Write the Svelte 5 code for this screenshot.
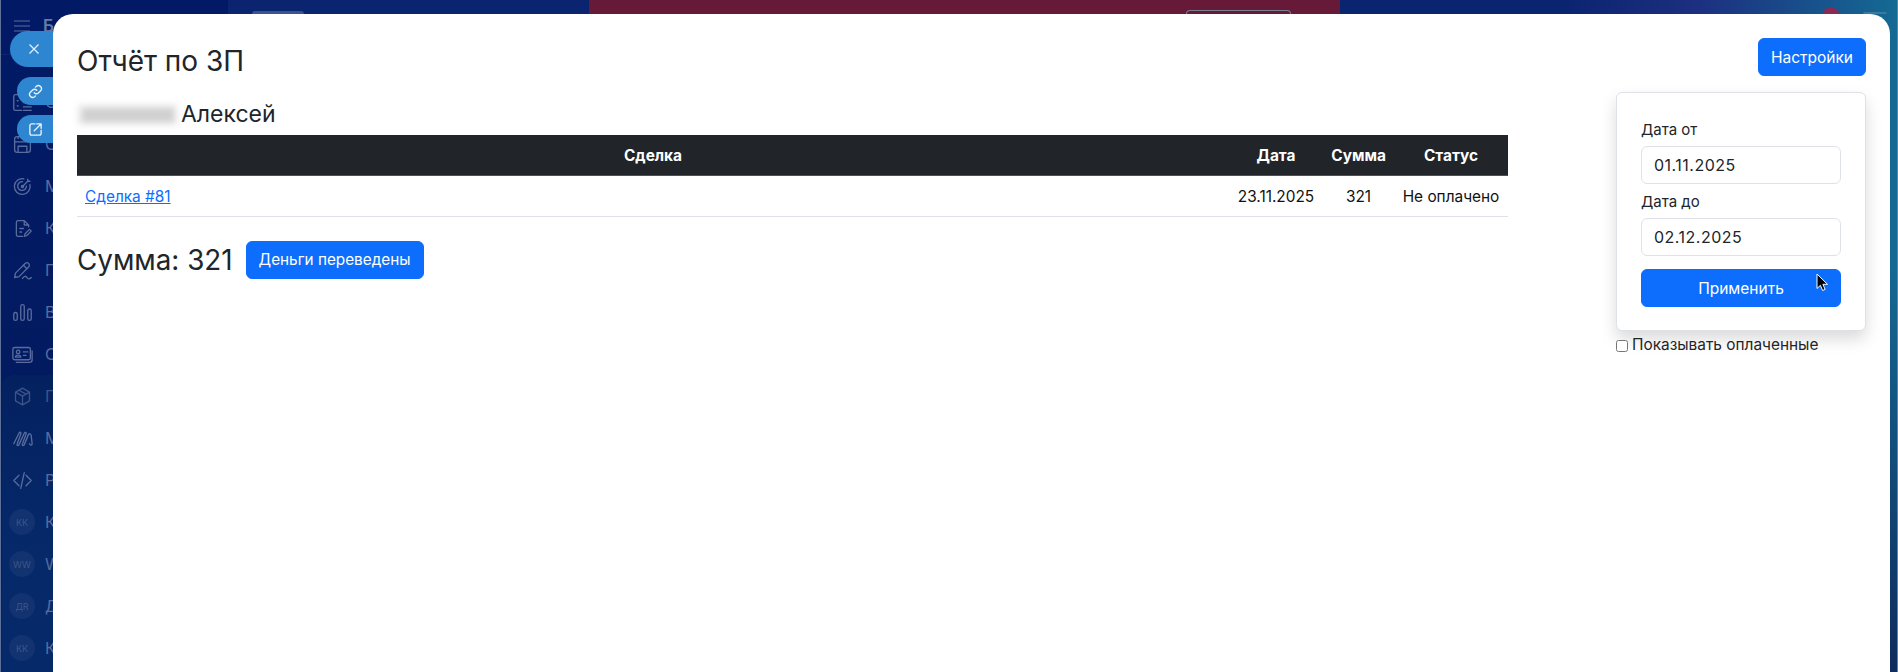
<script>
  const navTop = [
    { l: 'С', i: 'list' }, { l: 'С', i: 'save' }, { l: 'М', i: 'target' }, { l: 'К', i: 'doc' },
    { l: 'П', i: 'pen' }, { l: 'В', i: 'bars' }, { l: 'С', i: 'card' }
  ];
  const navGroup = [
    { l: 'П', i: 'cube', dim: true }, { l: 'М', i: 'wave' }, { l: 'Р', i: 'code' },
    { l: 'К', a: 'КК' }, { l: 'W', a: 'WW' }, { l: 'Д', a: 'ДR' }, { l: 'К', a: 'КК' }
  ];
</script>

{#snippet icon(name)}
  <svg class="nav-icon" viewBox="0 0 24 24" fill="none" stroke="currentColor" stroke-width="1.5" stroke-linecap="round" stroke-linejoin="round">
    {#if name === 'list'}
      <path d="M5 3h4v2h4V3h0M5 3H4a2 2 0 0 0-2 2v14a2 2 0 0 0 2 2h7M6 10h1M6 16h1M13 12h9M13 17h9M13 21h9" />
    {:else if name === 'save'}
      <rect x="3" y="3" width="18" height="18" rx="3" /><path d="M3 9h18M7 21v-7h10v7M7 3v2" />
    {:else if name === 'target'}
      <path d="M20.500 10a9 9 0 1 1-7-6.800" /><path d="M16.500 11.500a5 5 0 1 1-4.500-5" /><circle cx="12" cy="12" r="1.200" /><path d="M12 12l6-6M18 6V3.500M18 6h2.500" />
    {:else if name === 'doc'}
      <path d="M12 21H7a2 2 0 0 1-2-2V5a2 2 0 0 1 2-2h7l5 5v2M14 3v5h5M9 12h4M9 16h2" /><path d="M14 21l1-3 5-5 2 2-5 5z" />
    {:else if name === 'pen'}
      <path d="M3 20l1-5L15 4a2.500 2.500 0 0 1 4 4L8 19z" /><path d="M13 6l4 4M12 21c2-3 4-3 5-1s3 2 5 0" />
    {:else if name === 'bars'}
      <rect x="2" y="12" width="4" height="9" rx="2" /><rect x="10" y="3" width="4" height="18" rx="2" /><rect x="18" y="8" width="4" height="13" rx="2" />
    {:else if name === 'card'}
      <rect x="1" y="4" width="20" height="14" rx="2" /><path d="M23 8v10a3 3 0 0 1-3 3H5" /><circle cx="7" cy="9" r="2" /><path d="M4 15c0-3 6-3 6 0zM13 9h5M13 13h3" />
    {:else if name === 'cube'}
      <path d="M12 2.500l8 4.500v10l-8 4.500L4 17V7zM4 7l8 4.500L20 7M12 11.500v10M8 4.800l8 4.500" />
    {:else if name === 'wave'}
      <path d="M2 18L8 6c1-2 3-1 2 1L6 18c-1 2 1 3 2 1l6-13c1-2 3-1 2 1l-4 11c-1 2 1 3 2 1l5-12c1-1 3 0 3 2l1 9c0 2-2 2-3 0" />
    {:else if name === 'code'}
      <path d="M8 6l-6 6 6 6M16 6l6 6-6 6M14 3l-4 18" />
    {/if}
  </svg>
{/snippet}

{#snippet navRow(item)}
  <div class="nav-row" class:dim={item.dim}>
    <span class="nav-slot">
      {#if item.a}<span class="avatar">{item.a}</span>{:else}{@render icon(item.i)}{/if}
    </span>
    <span class="nav-label">{item.l}</span>
  </div>
{/snippet}

<div class="page">
  <aside class="sidebar">
    <div class="side-head">
      <span class="nav-slot">
        <svg class="burger" viewBox="0 0 16 12" fill="none" stroke="currentColor" stroke-width="1.200"><path d="M0 1h16M0 6h16M0 11h16" /></svg>
      </span>
      <span class="brand">Б</span>
    </div>
    <div class="nav-list">
      {#each navTop as item}{@render navRow(item)}{/each}
    </div>
    <div class="nav-group">
      {#each navGroup as item}{@render navRow(item)}{/each}
    </div>
  </aside>
  <div class="main-bg">
    <div class="topbar">
      <span class="pill"></span>
      <div class="banner"><span class="banner-btn"></span></div>
      <span class="badge"></span>
      <span class="user"></span>
    </div>
  </div>
</div>

<div class="side-actions">
  <button class="side-btn close" aria-label="Закрыть">
    <svg viewBox="0 0 12 12" width="12" height="12" fill="none" stroke="currentColor" stroke-width="1.200"><path d="M1.500 1.500l9 9M10.500 1.500l-9 9" /></svg>
  </button>
  <button class="side-btn" aria-label="Ссылка">
    <svg viewBox="0 0 24 24" width="15" height="15" fill="none" stroke="currentColor" stroke-width="2.200" stroke-linecap="round"><path d="M10 14a5 5 0 0 0 7 0l3.500-3.500a5 5 0 0 0-7-7L12 5" /><path d="M14 10a5 5 0 0 0-7 0l-3.500 3.500a5 5 0 0 0 7 7L12 19" /></svg>
  </button>
  <button class="side-btn" aria-label="Открыть">
    <svg viewBox="0 0 24 24" width="15" height="15" fill="none" stroke="currentColor" stroke-width="2.200" stroke-linecap="round" stroke-linejoin="round"><path d="M11 3H6a3 3 0 0 0-3 3v12a3 3 0 0 0 3 3h12a3 3 0 0 0 3-3v-5" /><path d="M10 14L21 3M14 3h7v7" /></svg>
  </button>
</div>

<section class="modal">
  <header class="modal-head">
    <h3>Отчёт по ЗП</h3>
    <button class="btn">Настройки</button>
  </header>
  <div class="modal-body">
    <div class="report">
      <h4><span class="blurred"><span></span></span> Алексей</h4>
      <table>
        <colgroup><col class="c1" /><col class="c2" /><col class="c3" /><col class="c4" /></colgroup>
        <thead>
          <tr><th>Сделка</th><th>Дата</th><th>Сумма</th><th>Статус</th></tr>
        </thead>
        <tbody>
          <tr>
            <td class="left"><a href="#81">Сделка #81</a></td>
            <td>23.11.2025</td>
            <td>321</td>
            <td>Не оплачено</td>
          </tr>
        </tbody>
      </table>
      <div class="total">
        <span class="sum">Сумма: 321</span>
        <button class="btn pay">Деньги переведены</button>
      </div>
    </div>
    <aside class="filters">
      <form class="card" onsubmit={(e) => e.preventDefault()}>
        <label for="from">Дата от</label>
        <input id="from" value="01.11.2025" />
        <label for="to">Дата до</label>
        <input id="to" value="02.12.2025" />
        <button class="btn apply">Применить</button>
      </form>
      <label class="check"><input type="checkbox" />Показывать оплаченные</label>
    </aside>
  </div>
</section>

<svg class="cursor" viewBox="0 0 12 19" width="12" height="19">
  <path d="M1 1v14.500l3.400-3.200 2.200 5.200 2.500-1.100-2.200-5.100h4.600z" fill="#000" stroke="#fff" stroke-width="1" />
</svg>

<style>
  :global(body) {
    margin: 0;
    background: #0b2470;
    overflow: hidden;
  }
  :global(#app) {
    position: relative;
    width: 1898px;
    height: 672px;
    overflow: hidden;
    font-family: Inter, "Liberation Sans", sans-serif;
    color: #212529;
  }
  .page {
    display: flex;
    height: 672px;
    border-left: 1px solid #5f7099;
    border-right: 1px solid #6b7ca6;
    box-sizing: border-box;
  }
  .sidebar {
    width: 227px;
    flex: none;
    display: flex;
    flex-direction: column;
    background: linear-gradient(180deg, #021a66 0%, #021b60 55%, #03245e 100%);
    color: #5a6c9e;
    font-size: 16px;
  }
  .side-head {
    height: 55px;
    flex: none;
    display: flex;
    align-items: flex-start;
    padding-top: 16px;
    box-sizing: border-box;
    border-bottom: 1px solid #0b2670;
  }
  .burger { width: 16px; height: 12px; margin-top: 4px; }
  .brand { font-weight: 600; font-size: 17px; line-height: 20px; color: #6a7aa6; }
  .nav-list { padding-top: 26px; }
  .nav-group {
    flex: 1;
    margin: 0 0 0 1px;
    background: linear-gradient(180deg, #04215f 0%, #06296a 60%);
    border-radius: 12px 0 0 0;
  }
  .nav-group .nav-slot { margin-left: -1px; }
  .nav-row {
    height: 42px;
    display: flex;
    align-items: center;
    gap: 2px;
  }
  .nav-row.dim { color: #3d5489; }
  .nav-slot {
    width: 42px;
    flex: none;
    display: flex;
    justify-content: center;
  }
  .nav-icon { width: 21px; height: 21px; }
  .nav-label { font-size: 16px; }
  .avatar {
    width: 26px;
    height: 26px;
    border-radius: 50%;
    background: #123270;
    color: #3f5688;
    font-size: 9px;
    display: flex;
    align-items: center;
    justify-content: center;
  }
  .main-bg {
    flex: 1;
    background:
      linear-gradient(180deg, rgba(20, 110, 150, 0) 0 40%, #0f2c5c 100%),
      linear-gradient(90deg, #0b2470 0%, #0b2470 80%, #1d2f80 88%, #146a94 100%);
  }
  .topbar {
    height: 14px;
    display: flex;
    align-items: flex-end;
  }
  .pill {
    width: 52px;
    height: 3px;
    margin-left: 24px;
    background: #3d5090;
    border-radius: 8px 8px 0 0;
  }
  .banner {
    width: 751px;
    height: 14px;
    margin-left: 285px;
    background: #661a38;
    display: flex;
    align-items: flex-end;
    padding-left: 597px;
    box-sizing: border-box;
  }
  .banner-btn {
    width: 105px;
    height: 4px;
    box-sizing: border-box;
    border: 1px solid #76808f;
    border-bottom: 0;
    border-radius: 4px 4px 0 0;
  }
  .badge {
    width: 16px;
    height: 6px;
    margin-left: 483px;
    background: #8a2a52;
    border-radius: 8px 8px 0 0;
  }
  .user {
    width: 24px;
    height: 2px;
    margin-left: 24px;
    background: #3b7a9e;
    border-radius: 8px 8px 0 0;
  }
  .side-actions {
    position: absolute;
    left: 0;
    top: 31px;
    width: 53px;
    display: flex;
    flex-direction: column;
    align-items: flex-end;
    gap: 10px;
  }
  .side-btn {
    width: 36px;
    height: 28px;
    border: 0;
    background: #2e86d0;
    color: #e8f1fa;
    border-radius: 14px 0 0 14px;
    display: flex;
    align-items: center;
    justify-content: flex-start;
    padding: 0 0 0 11px;
    box-sizing: border-box;
  }
  .side-btn.close {
    width: 43px;
    height: 36px;
    border-radius: 18px 0 0 18px;
    padding-left: 18px;
  }
  .modal {
    position: absolute;
    left: 53px;
    top: 14px;
    width: 1837px;
    height: 658px;
    box-sizing: border-box;
    padding: 24px;
    background: #fff;
    border-radius: 20px 20px 0 0;
  }
  .modal-head {
    display: flex;
    align-items: flex-start;
    justify-content: space-between;
    height: 38px;
    margin-bottom: 16px;
  }
  h3 {
    margin: 0;
    padding-top: 7px;
    font-size: 28px;
    font-weight: 400;
    line-height: 1.2;
  }
  .btn {
    height: 38px;
    padding: 0 12px;
    border: 1px solid #0d6efd;
    border-radius: 6px;
    background: #0d6efd;
    color: #fff;
    font: inherit;
    font-size: 15.500px;
    white-space: nowrap;
  }
  .btn.pay { font-size: 15.300px; }
  .modal-body {
    display: flex;
    justify-content: space-between;
    align-items: flex-start;
  }
  .report {
    width: 1431px;
    padding-top: 8px;
  }
  h4 {
    margin: 0 0 6px;
    font-size: 23px;
    font-weight: 400;
    line-height: 29px;
    display: flex;
    align-items: center;
    gap: 3px;
  }
  .blurred {
    width: 101px;
    height: 22px;
    background: #f0f0f0;
    filter: blur(3px);
    display: flex;
    align-items: center;
    justify-content: center;
  }
  .blurred span {
    display: block;
    width: 92px;
    height: 14px;
    background: #d0d0d0;
  }
  table {
    width: 1431px;
    table-layout: fixed;
    border-collapse: collapse;
    font-size: 15.400px;
  }
  .c2 { width: 94px; }
  .c3 { width: 71px; }
  .c4 { width: 114px; }
  th {
    height: 40px;
    padding: 2px 8px 0;
    background: #212529;
    color: #fff;
    font-weight: 700;
    font-size: 15.400px;
    text-align: center;
    border-bottom: 1px solid #4d5154;
    box-sizing: border-box;
  }
  td {
    height: 41px;
    padding: 2px 8px 0;
    text-align: center;
    color: #111;
    border-bottom: 1px solid #dee2e6;
    box-sizing: border-box;
    white-space: nowrap;
  }
  td.left { text-align: left; }
  a { color: #0d6efd; text-decoration: underline; }
  .total {
    display: flex;
    align-items: center;
    gap: 13px;
    margin-top: 24px;
  }
  .sum { font-size: 27.800px; line-height: 38px; }
  .filters {
    width: 250px;
    flex: none;
  }
  .card {
    display: flex;
    flex-direction: column;
    box-sizing: border-box;
    height: 239px;
    padding: 27px 24px 0;
    background: #fff;
    border: 1px solid #dee2e6;
    border-radius: 6px;
    box-shadow: 0 8px 16px rgba(0, 0, 0, 0.15);
    font-size: 15px;
  }
  .card label {
    line-height: 20px;
    margin-bottom: 6px;
  }
  .card input {
    height: 38px;
    box-sizing: border-box;
    padding: 0 12px;
    margin-bottom: 8px;
    border: 1px solid #dee2e6;
    border-radius: 6px;
    font: inherit;
    font-size: 16px;
    color: #212529;
    letter-spacing: 0.5px;
    outline: none;
  }
  .apply { margin-top: 5px; width: 100%; }
  .check {
    display: flex;
    align-items: center;
    gap: 4px;
    margin-top: 3px;
    font-size: 15.400px;
    line-height: 22px;
  }
  .check input {
    width: 12px;
    height: 12px;
    margin: 2px 0 0;
  }
  .cursor {
    position: absolute;
    left: 1816px;
    top: 273px;
  }
</style>
